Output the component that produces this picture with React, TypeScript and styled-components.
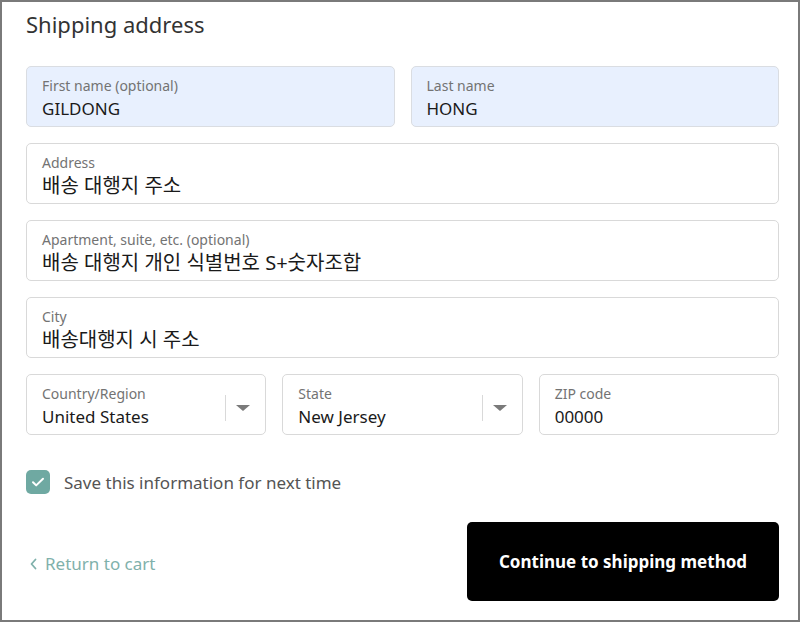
import styled, { createGlobalStyle } from "styled-components";

const Global = createGlobalStyle`
  html, body {
    margin: 0;
    padding: 0;
    background: #ffffff;
  }
  body {
    font-family: "Noto Sans", "Noto Sans CJK KR", sans-serif;
  }
`;

const Frame = styled.div`
  box-sizing: border-box;
  width: 800px;
  height: 622px;
  border: 2px solid #7a7a7a;
  padding: 6px 19px 0 24px;
  background: #fff;
`;

const Title = styled.h2`
  margin: 0;
  font-size: 22px;
  font-weight: 400;
  color: #333333;
  line-height: 32px;
`;

const Form = styled.div`
  display: flex;
  flex-direction: column;
  gap: 16px;
  margin-top: 26px;
`;

const Row = styled.div<{ $cols: number }>`
  display: grid;
  grid-template-columns: repeat(${(p) => p.$cols}, 1fr);
  gap: 16px;
`;

const Field = styled.div<{ $filled?: boolean }>`
  box-sizing: border-box;
  height: 61px;
  border: 1px solid ${(p) => (p.$filled ? "#dadde2" : "#d9d9d9")};
  border-radius: 5px;
  background: ${(p) => (p.$filled ? "#e8f0fe" : "#ffffff")};
  padding: 9px 15px 0;
  display: flex;
  align-items: stretch;
`;

const FieldText = styled.div`
  flex: 1;
  display: flex;
  flex-direction: column;
  min-width: 0;
`;

const Label = styled.div`
  font-size: 14px;
  color: #737373;
  line-height: 20px;
`;

const Value = styled.div<{ $cjk?: boolean }>`
  font-size: ${(p) => (p.$cjk ? "20px" : "17px")};
  color: #1a1a1a;
  line-height: 26px;
  white-space: nowrap;
`;

const SelectTail = styled.div`
  display: flex;
  align-items: center;
  margin-top: 6px;
  height: 36px;
`;

const Divider = styled.span`
  width: 1px;
  height: 26px;
  background: #d9d9d9;
  margin-right: 10px;
`;

const Caret = styled.span`
  width: 0;
  height: 0;
  border-left: 7px solid transparent;
  border-right: 7px solid transparent;
  border-top: 6px solid #7a7a7a;
`;

const CheckRow = styled.label`
  display: flex;
  align-items: center;
  gap: 14px;
  margin-top: 35px;
`;

const Box = styled.span`
  width: 24px;
  height: 24px;
  border-radius: 5px;
  background: #6fa9a2;
  display: flex;
  align-items: center;
  justify-content: center;
`;

const CheckText = styled.span`
  font-size: 17px;
  color: #545454;
`;

const Footer = styled.div`
  display: flex;
  align-items: center;
  justify-content: space-between;
  margin-top: 28px;
`;

const Back = styled.a`
  display: flex;
  align-items: center;
  gap: 8px;
  font-size: 17px;
  color: #7fb1ab;
  margin-left: 4px;
  padding-top: 4px;
`;

const Button = styled.button`
  width: 312px;
  height: 79px;
  border: none;
  border-radius: 5px;
  background: #000;
  color: #fff;
  font-family: inherit;
  font-size: 17px;
  font-weight: 700;
`;

const TextField = ({
  label,
  value,
  filled,
  cjk,
}: {
  label: string;
  value: string;
  filled?: boolean;
  cjk?: boolean;
}) => (
  <Field $filled={filled}>
    <FieldText>
      <Label>{label}</Label>
      <Value $cjk={cjk}>{value}</Value>
    </FieldText>
  </Field>
);

const SelectField = ({ label, value }: { label: string; value: string }) => (
  <Field>
    <FieldText>
      <Label>{label}</Label>
      <Value>{value}</Value>
    </FieldText>
    <SelectTail>
      <Divider />
      <Caret />
    </SelectTail>
  </Field>
);

export default function App() {
  return (
    <>
      <Global />
      <Frame>
        <Title>Shipping address</Title>
        <Form>
          <Row $cols={2}>
            <TextField label="First name (optional)" value="GILDONG" filled />
            <TextField label="Last name" value="HONG" filled />
          </Row>
          <TextField label="Address" value="배송 대행지 주소" cjk />
          <TextField label="Apartment, suite, etc. (optional)" value="배송 대행지 개인 식별번호 S+숫자조합" cjk />
          <TextField label="City" value="배송대행지 시 주소" cjk />
          <Row $cols={3}>
            <SelectField label="Country/Region" value="United States" />
            <SelectField label="State" value="New Jersey" />
            <TextField label="ZIP code" value="00000" />
          </Row>
        </Form>
        <CheckRow>
          <Box>
            <svg width="16" height="16" viewBox="0 0 16 16" fill="none">
              <path d="M3 8.2l3.2 3.2L13 4.8" stroke="#fff" strokeWidth="2" strokeLinecap="round" strokeLinejoin="round" />
            </svg>
          </Box>
          <CheckText>Save this information for next time</CheckText>
        </CheckRow>
        <Footer>
          <Back>
            <svg width="7" height="12" viewBox="0 0 7 12" fill="none">
              <path d="M5.5 1.5L1.5 6l4 4.5" stroke="#7fb1ab" strokeWidth="1.8" strokeLinecap="round" strokeLinejoin="round" />
            </svg>
            Return to cart
          </Back>
          <Button>Continue to shipping method</Button>
        </Footer>
      </Frame>
    </>
  );
}
